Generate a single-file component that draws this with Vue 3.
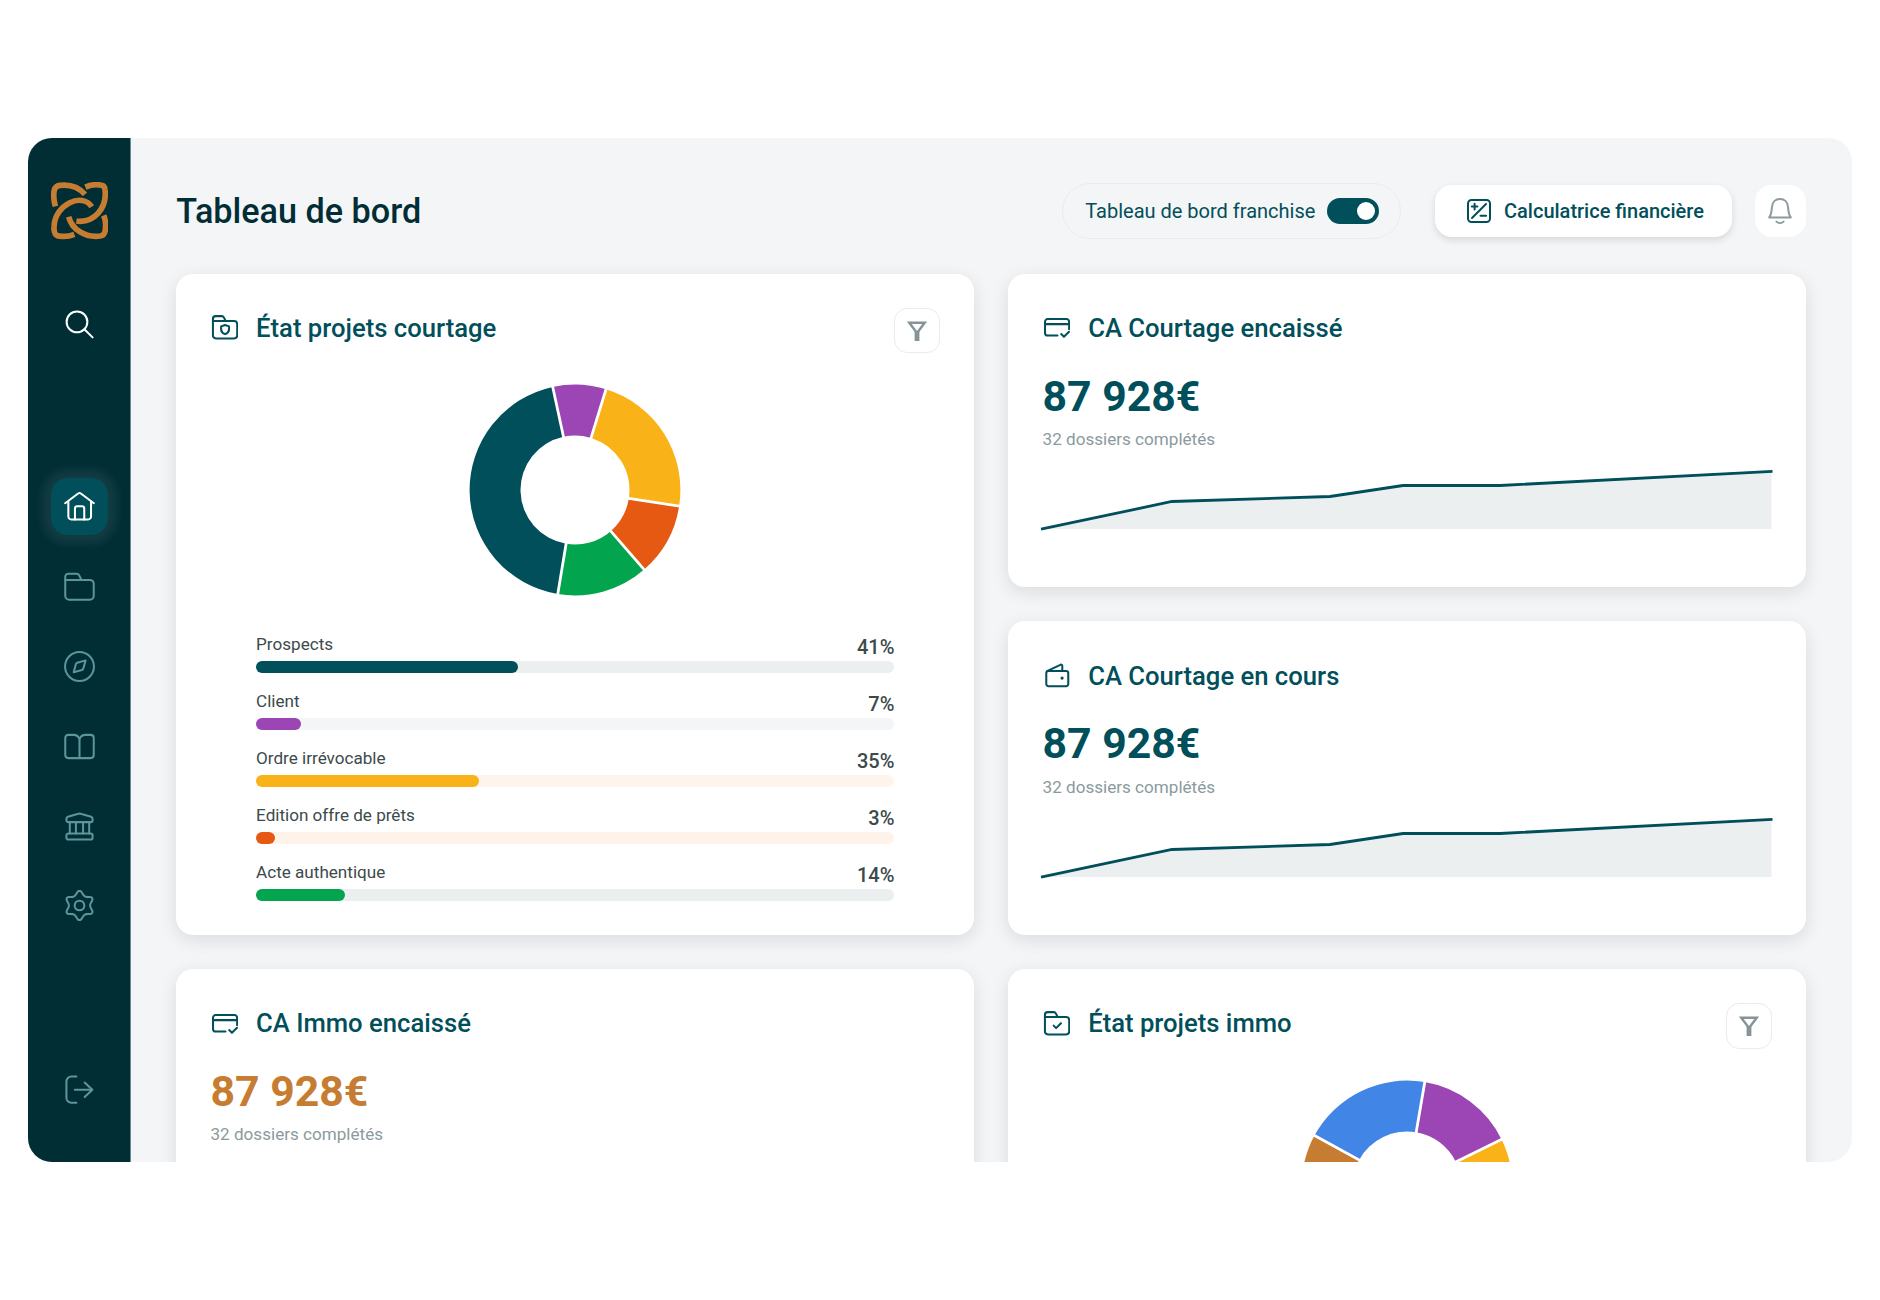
<template>
  <div class="page">
    <div class="window">
      <aside class="sidebar">
        <svg class="sidebar__logo" viewBox="0 0 172 172">
          <path d="M13 73C8 54 7 36 10 24Q13 12 26 10C58 6 82 14 102 37" />
          <path d="M53 104C62 140 100 168 148 162Q160 160 162 148C165 130 164 114 158 100" />
          <path class="sidebar__logo-gap" d="M116 65C88 34 14 70 9 134" />
          <path d="M122 74C94 30 12 66 9 134Q8 148 13 156Q18 163 34 163C50 164 60 161 70 157" />
          <path class="sidebar__logo-gap" d="M162 24C168 78 130 122 80 118" />
          <path d="M103 15C120 8 140 7 152 10Q161 12 162 24C168 78 130 124 76 117" />
        </svg>

        <a class="nav-item nav-item--search" href="#">
          <svg class="nav-item__icon" viewBox="0 0 32 32">
            <path v-for="d in icons.search" :key="d" :d="d" />
          </svg>
        </a>

        <nav class="sidebar__nav">
          <a
            v-for="item in navItems"
            :key="item"
            href="#"
            :class="['nav-item', { 'nav-item--active': item === activeItem }]"
            @click.prevent="activeItem = item"
          >
            <svg class="nav-item__icon" viewBox="0 0 32 32">
              <path v-for="d in icons[item]" :key="d" :d="d" />
            </svg>
          </a>
        </nav>

        <a class="nav-item nav-item--logout" href="#">
          <svg class="nav-item__icon" viewBox="0 0 32 32">
            <path v-for="d in icons.logout" :key="d" :d="d" />
          </svg>
        </a>
      </aside>

      <main class="content">
        <header class="topbar">
          <h1 class="topbar__title">Tableau de bord</h1>
          <div class="switch">
            <span>Tableau de bord franchise</span>
            <button
              :class="['switch__track', { 'switch__track--on': franchise }]"
              @click="franchise = !franchise"
            >
              <span class="switch__knob"></span>
            </button>
          </div>
          <button class="calc-button">
            <svg class="calc-button__icon" viewBox="0 0 24 24">
              <rect x="1" y="1" width="22" height="22" rx="3.5" />
              <path d="M5 19L19 5M4.8 7.6h5.6M7.6 4.8v5.6M13.5 16.8h5.6" />
            </svg>
            <span>Calculatrice financière</span>
          </button>
          <button class="bell-button">
            <svg class="bell-button__icon" viewBox="0 0 26 28">
              <path d="M2.2 20.4C4.3 18.2 4.6 15 4.9 10.4C5.2 5 8.5 2 13 2s7.8 3 8.1 8.4c.3 4.6.6 7.8 2.7 10z" />
              <path d="M9.4 24.6c2 1.9 5.2 1.9 7.2 0" />
            </svg>
          </button>
        </header>

        <div class="board">
          <div v-for="(column, i) in columns" :key="i" class="board__column">
            <section
              v-for="card in column"
              :key="card.title"
              :class="['card', `card--${card.type}`]"
            >
              <div class="card__header">
                <svg class="card__icon" viewBox="0 0 28 28">
                  <path v-for="d in icons[card.icon]" :key="d" :d="d" />
                </svg>
                <h2 class="card__title">{{ card.title }}</h2>
                <button v-if="card.type === 'projects'" class="filter-button">
                  <svg class="filter-button__icon" viewBox="0 0 20 20">
                    <path d="M2.3 1.7h15.4L10 12z" />
                    <path class="filter-button__stem" d="M7.6 10h4.8v10H7.6z" />
                  </svg>
                </button>
              </div>

              <template v-if="card.type === 'projects'">
                <svg class="donut" viewBox="-106 -106 212 212">
                  <path
                    v-for="slice in card.slices"
                    :key="slice.from"
                    :d="arc(slice.from, slice.to)"
                    :fill="slice.color"
                  />
                  <path
                    v-for="slice in card.slices"
                    :key="slice.to"
                    class="donut__gap"
                    :d="spoke(slice.from)"
                  />
                </svg>
                <ul class="progress">
                  <li v-for="row in card.rows" :key="row.label" class="progress__row">
                    <div class="progress__head">
                      <span class="progress__label">{{ row.label }}</span>
                      <span class="progress__value">{{ row.value }}%</span>
                    </div>
                    <div class="progress__track" :style="{ background: row.track }">
                      <div
                        class="progress__fill"
                        :style="{ width: row.value + '%', background: row.color }"
                      ></div>
                    </div>
                  </li>
                </ul>
              </template>

              <template v-else>
                <p :class="['card__amount', { 'card__amount--immo': card.immo }]">87 928€</p>
                <p class="card__caption">32 dossiers complétés</p>
                <svg class="trend" viewBox="0 0 730 64">
                  <path class="trend__area" d="M0 61L130 33.5L288 28.5L361 17.5H458L729.5 3.5V61z" />
                  <path class="trend__line" d="M-1 61.2L130 33.5L288 28.5L361 17.5H458L730.5 3.4" />
                </svg>
              </template>
            </section>
          </div>
        </div>
      </main>
    </div>
  </div>
</template>

<script setup>
import { ref } from 'vue'

const OUTER = 105.4
const INNER = 54.5

const polar = (angle, radius) => {
  const rad = ((angle - 90) * Math.PI) / 180
  return `${(radius * Math.cos(rad)).toFixed(2)} ${(radius * Math.sin(rad)).toFixed(2)}`
}

const arc = (from, to) => {
  const large = to - from > 180 ? 1 : 0
  return [
    `M${polar(from, OUTER)}`,
    `A${OUTER} ${OUTER} 0 ${large} 1 ${polar(to, OUTER)}`,
    `L${polar(to, INNER)}`,
    `A${INNER} ${INNER} 0 ${large} 0 ${polar(from, INNER)}z`
  ].join('')
}

const spoke = (angle) => `M${polar(angle, INNER - 2)}L${polar(angle, OUTER + 2)}`

// Six-lobed outline of the settings icon, centred on 16,16
const gearOutline = () => {
  const points = []
  for (let a = 0; a < 360; a += 5) {
    const rad = (a * Math.PI) / 180
    const r = 12.8 + 2.1 * Math.cos(6 * rad) + 0.3 * Math.cos(12 * rad)
    points.push(`${(16 + r * Math.sin(rad)).toFixed(2)} ${(16 - r * Math.cos(rad)).toFixed(2)}`)
  }
  return `M${points.join('L')}z`
}

const folder = [
  'M2 7.3V5a2.8 2.8 0 0 1 2.8-2.8h6.4c1 0 1.6.4 2.1 1.3L15.2 7.3',
  'M2 7.3H24a3.2 3.2 0 0 1 3.2 3.2v11.6a3.2 3.2 0 0 1-3.2 3.2H5.2a3.2 3.2 0 0 1-3.2-3.2z'
]

const icons = {
  search: ['M2.7 13.3a10.7 10.7 0 1 0 21.4 0a10.7 10.7 0 1 0-21.4 0', 'M21 21L29.5 29.3'],
  home: [
    'M1.2 12.6L14.6 2.6Q16 1.5 17.4 2.6L30.8 12.6',
    'M4.5 11v15.4a3 3 0 0 0 3 3h17.4a3 3 0 0 0 3-3V11',
    'M11.3 29.4V18.2a2.4 2.4 0 0 1 2.4-2.4h4.8a2.4 2.4 0 0 1 2.4 2.4v11.2'
  ],
  folder: [
    'M1.3 9.2V6a3.2 3.2 0 0 1 3.2-3.2h8.5c1.4 0 2.1.6 2.7 1.7L18 9.2',
    'M1.3 9.2H26.7a4 4 0 0 1 4 4v12.4a4 4 0 0 1-4 4H5.3a4 4 0 0 1-4-4z'
  ],
  compass: [
    'M1.1 16a14.9 14.9 0 1 0 29.8 0a14.9 14.9 0 1 0-29.8 0',
    'M22.3 9.7L13.7 12.2Q12.7 12.5 12.3 13.5L10 22L18.5 19.6Q19.6 19.2 19.9 18.2z'
  ],
  book: [
    'M16 8.6C15 5.5 13.2 4 10 4H4.5a3.2 3.2 0 0 0-3.2 3.2v17.6a3.2 3.2 0 0 0 3.2 3.2h23a3.2 3.2 0 0 0 3.2-3.2V7.2a3.2 3.2 0 0 0-3.2-3.2H22C18.8 4 17 5.5 16 8.6V28'
  ],
  bank: [
    'M2.5 8.2Q2.5 6.4 4 5.9L14.8 2.9Q16 2.5 17.2 2.9L28 5.9Q29.5 6.4 29.5 8.2V9.5a2 2 0 0 1-2 2h-23a2 2 0 0 1-2-2z',
    'M6 11.5V23.2M12.3 11.5V23.2M19.7 11.5V23.2M26 11.5V23.2',
    'M4.5 23.2h23a2 2 0 0 1 2 2v2.3a2 2 0 0 1-2 2h-23a2 2 0 0 1-2-2v-2.3a2 2 0 0 1 2-2z'
  ],
  gear: [gearOutline(), 'M11 16a5 5 0 1 0 10 0a5 5 0 1 0-10 0'],
  logout: [
    'M12.8 2.6H7.5a5 5 0 0 0-5 5v17a5 5 0 0 0 5 5h5.3',
    'M11.2 16.3H29.3M21.3 8.8L29.3 16.3L21.3 23.8'
  ],
  folderShield: [
    ...folder,
    'M14.6 11.5L18.7 12.8V16.2Q18.5 19.3 14.6 20.9Q10.7 19.3 10.5 16.2V12.8z'
  ],
  folderCheck: [...folder, 'M11 16.2L13.6 18.8L18.6 13.8'],
  cardCheck: [
    'M15 22.3H4.8a2.7 2.7 0 0 1-2.7-2.7V8a2.7 2.7 0 0 1 2.7-2.7h19.6A2.7 2.7 0 0 1 27.1 8v7.8',
    'M2.1 10.5h25',
    'M18.9 20.8L21.7 23.5L27 18.5'
  ],
  wallet: [
    'M5.7 9.3h18.2a2.3 2.3 0 0 1 2.3 2.3v11.2a2.3 2.3 0 0 1-2.3 2.3H5.7a2.3 2.3 0 0 1-2.3-2.3V11.6a2.3 2.3 0 0 1 2.3-2.3z',
    'M4.2 9.5L18 2.9Q20 2.2 20 4.2V9.3',
    'M19.2 16.7a.6.6 0 1 0 1.2 0a.6.6 0 1 0-1.2 0'
  ]
}

const navItems = ['home', 'folder', 'compass', 'book', 'bank', 'gear']
const activeItem = ref('home')
const franchise = ref(true)

const colors = {
  teal: '#014f5a',
  purple: '#9c45b4',
  yellow: '#f9b217',
  orange: '#e55913',
  green: '#02a44e',
  blue: '#4185e6',
  bronze: '#c67c31'
}

const columns = [
  [
    {
      type: 'projects',
      icon: 'folderShield',
      title: 'État projets courtage',
      slices: [
        { from: -12.2, to: 17.1, color: colors.purple },
        { from: 17.1, to: 98.8, color: colors.yellow },
        { from: 98.8, to: 139, color: colors.orange },
        { from: 139, to: 189.4, color: colors.green },
        { from: 189.4, to: 347.8, color: colors.teal }
      ],
      rows: [
        { label: 'Prospects', value: 41, color: colors.teal, track: '#ebeff0' },
        { label: 'Client', value: 7, color: colors.purple, track: '#f4f5f7' },
        { label: 'Ordre irrévocable', value: 35, color: colors.yellow, track: '#fff4eb' },
        { label: 'Edition offre de prêts', value: 3, color: colors.orange, track: '#fef3ea' },
        { label: 'Acte authentique', value: 14, color: colors.green, track: '#ebeff0' }
      ]
    },
    { type: 'revenue', icon: 'cardCheck', title: 'CA Immo encaissé', immo: true }
  ],
  [
    { type: 'revenue', icon: 'cardCheck', title: 'CA Courtage encaissé' },
    { type: 'revenue', icon: 'wallet', title: 'CA Courtage en cours' },
    {
      type: 'projects',
      icon: 'folderCheck',
      title: 'État projets immo',
      slices: [
        { from: -61.4, to: 9.7, color: colors.blue },
        { from: 9.7, to: 63.8, color: colors.purple },
        { from: 63.8, to: 180, color: colors.yellow },
        { from: 180, to: 298.6, color: colors.bronze }
      ],
      rows: []
    }
  ]
]
</script>

<style>
body {
  margin: 0;
  background: #ffffff;
}
</style>

<style scoped>
.page {
  box-sizing: border-box;
  width: 1880px;
  height: 1300px;
  padding: 138px 28px;
  font-family: Roboto, sans-serif;
  overflow: hidden;
}

.window {
  display: flex;
  height: 1024px;
  border-radius: 24px;
  background: #f4f5f7;
  overflow: hidden;
}

button {
  border: none;
  padding: 0;
  font-family: inherit;
  cursor: pointer;
}

svg {
  display: block;
  flex: none;
  fill: none;
}

/* Sidebar */
.sidebar {
  box-sizing: border-box;
  display: flex;
  flex: none;
  flex-direction: column;
  align-items: center;
  width: 103px;
  padding: 44.4px 0;
  border-right: 1px solid #6d878b;
  background: #012d34;
}

.sidebar__logo {
  width: 57.4px;
  height: 57.4px;
  margin-left: 0.8px;
  stroke: #c67c31;
  stroke-width: 17;
}

.sidebar__logo-gap {
  stroke: #012d34;
  stroke-width: 25;
}

.sidebar__nav {
  display: flex;
  flex-direction: column;
  gap: 22.8px;
  margin-top: 125px;
}

.nav-item {
  display: flex;
  align-items: center;
  justify-content: center;
  width: 57px;
  height: 57px;
  border-radius: 17px;
  color: #5c959c;
}

.nav-item--search {
  margin-top: 56.7px;
  color: #ffffff;
}

.nav-item--active {
  background: #014f5a;
  box-shadow: 0 0 8px 9px rgba(255, 255, 255, 0.07);
  color: #ffffff;
}

.nav-item--logout {
  margin-top: auto;
}

.nav-item__icon {
  width: 31px;
  height: 31px;
  stroke: currentColor;
  stroke-width: 2.1;
  stroke-linecap: round;
  stroke-linejoin: round;
}

/* Top bar */
.content {
  flex: 1;
  min-width: 0;
  padding: 45px 45.9px 0 45.3px;
}

.topbar {
  display: flex;
  align-items: center;
  height: 56px;
}

.topbar__title {
  flex: 1;
  margin: 0;
  color: #012d34;
  font-size: 34.2px;
  font-weight: 500;
}

.switch {
  box-sizing: border-box;
  display: flex;
  align-items: center;
  justify-content: space-between;
  width: 339px;
  height: 56px;
  padding: 0 21.5px 0 22px;
  border: 1px solid #e9ebec;
  border-radius: 28px;
  color: #014f5a;
  font-size: 20px;
}

.switch__track {
  display: flex;
  box-sizing: border-box;
  width: 51.3px;
  height: 26px;
  padding: 4px;
  border-radius: 13px;
  background: #a5b3b6;
}

.switch__track--on {
  justify-content: flex-end;
  background: #014f5a;
}

.switch__knob {
  width: 18px;
  height: 18px;
  border-radius: 50%;
  background: #ffffff;
}

.calc-button {
  display: flex;
  align-items: center;
  justify-content: center;
  gap: 13.5px;
  width: 297px;
  height: 51.3px;
  margin-left: 34px;
  padding-left: 3px;
  border-radius: 17px;
  background: #ffffff;
  box-shadow: 0 3px 7px rgba(0, 20, 25, 0.13);
  color: #014f5a;
  font-size: 20px;
  font-weight: 500;
}

.calc-button__icon {
  width: 24px;
  height: 24px;
  stroke: currentColor;
  stroke-width: 2;
  stroke-linecap: round;
}

.bell-button {
  display: flex;
  align-items: center;
  justify-content: center;
  width: 51.3px;
  height: 51.3px;
  margin-left: 22.6px;
  border-radius: 17px;
  background: #ffffff;
}

.bell-button__icon {
  width: 26px;
  height: 28px;
  stroke: #8b9a9e;
  stroke-width: 2;
  stroke-linecap: round;
  stroke-linejoin: round;
}

/* Cards */
.board {
  display: grid;
  grid-template-columns: 1fr 1fr;
  gap: 34.2px;
  margin-top: 34.6px;
}

.board__column {
  display: flex;
  flex-direction: column;
  gap: 34.2px;
}

.card {
  box-sizing: border-box;
  display: flex;
  flex: none;
  flex-direction: column;
  padding: 34.2px;
  border-radius: 17px;
  background: #ffffff;
  box-shadow: 0 5px 18px rgba(0, 20, 25, 0.11);
}

.card--projects {
  height: 661.2px;
}

.card--revenue {
  height: 313.6px;
}

.card__header {
  display: flex;
  align-items: flex-start;
}

.card--revenue .card__header {
  height: 41px;
}

.card__icon {
  width: 27px;
  height: 27px;
  margin: 6.6px 0.5px 0;
  stroke: #014f5a;
  stroke-width: 2.1;
  stroke-linecap: round;
  stroke-linejoin: round;
}

.card__title {
  flex: 1;
  margin: 0 0 0 17.6px;
  color: #014f5a;
  font-size: 25.65px;
  font-weight: 500;
  line-height: 40px;
}

.filter-button {
  box-sizing: border-box;
  display: flex;
  align-items: center;
  justify-content: center;
  width: 45.6px;
  height: 45.6px;
  border: 1px solid #e9ecec;
  border-radius: 13px;
  background: #ffffff;
}

.filter-button__icon {
  width: 20px;
  height: 20px;
  stroke: #879497;
  stroke-width: 2.4;
}

.filter-button__stem {
  fill: #879497;
  stroke: none;
}

.card__amount {
  margin: 21.8px 0 0;
  color: #014f5a;
  font-size: 42.75px;
  font-weight: 700;
  line-height: 50px;
}

.card__amount--immo {
  color: #c67c31;
}

.card__caption {
  margin: 5.2px 0 0;
  color: #8b9a9e;
  font-size: 17.1px;
  line-height: 26px;
}

.trend {
  width: 730px;
  height: 64px;
  margin: 16px 0 0 -0.5px;
  overflow: visible;
}

.trend__area {
  fill: #ebeff0;
}

.trend__line {
  stroke: #014f5a;
  stroke-width: 2.8;
}

/* Donut and progress list */
.donut {
  align-self: center;
  width: 212px;
  height: 212px;
  margin-top: 30.8px;
}

.donut__gap {
  stroke: #ffffff;
  stroke-width: 2.8;
}

.progress {
  display: flex;
  flex-direction: column;
  gap: 17px;
  margin: auto 45.6px 0 45.6px;
  padding: 0;
  list-style: none;
}

.progress__row {
  display: flex;
  flex-direction: column;
  justify-content: space-between;
  height: 40px;
}

.progress__head {
  display: flex;
  justify-content: space-between;
  height: 28px;
}

.progress__label {
  color: #3c4a4c;
  font-size: 17.1px;
  line-height: 23px;
}

.progress__value {
  color: #3c4a4c;
  font-size: 20px;
  font-weight: 500;
  line-height: 29px;
}

.progress__track {
  height: 11.4px;
  border-radius: 6px;
}

.progress__fill {
  height: 100%;
  border-radius: 6px;
}
</style>
